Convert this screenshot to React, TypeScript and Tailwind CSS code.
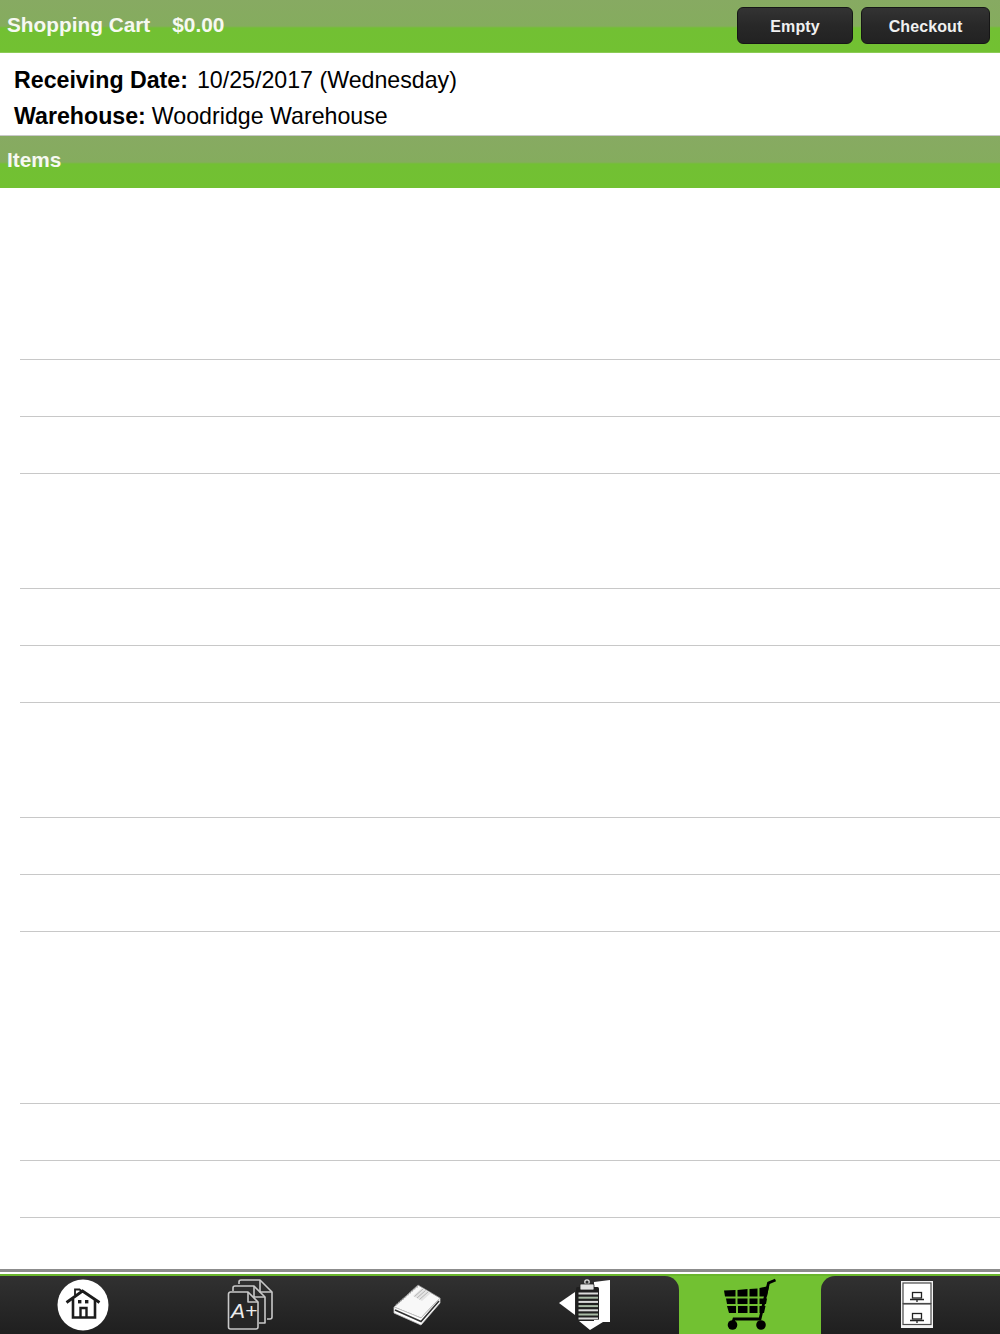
import React from 'react';

const rowHeights = [172, 57, 57, 115, 57, 57, 115, 57, 57, 172, 57, 57];

function GreenBar({ children, className }: { children: React.ReactNode; className?: string }) {
  return (
    <div
      className={`flex w-full items-start justify-between bg-[linear-gradient(to_bottom,#87aa62_0px,#85ac5e_26px,#72c033_28px,#72c132_52px)] ${className ?? ''}`}
    >
      {children}
    </div>
  );
}

function DarkButton({ label, width }: { label: string; width: string }) {
  return (
    <button
      className={`${width} h-[37px] rounded-[6px] border border-[#161616] bg-[linear-gradient(to_bottom,#333333,#282828_50%,#222222)] pt-[3px] text-[16px] font-bold tracking-[0.1px] text-[#f0f0f0]`}
    >
      {label}
    </button>
  );
}

function HomeIcon() {
  return (
    <svg width="52" height="52" viewBox="0 0 52 52">
      <circle cx="26" cy="26" r="25.5" fill="#ffffff" />
      <path d="M18 16V10.5h4.5l3 2.5" fill="none" stroke="#1c1c1c" strokeWidth="1.8" />
      <path d="M9.5 23.5 25.5 12 42.5 23.5" fill="none" stroke="#1c1c1c" strokeWidth="2.8" />
      <path d="M16 20V38.5h22V20" fill="none" stroke="#1c1c1c" strokeWidth="2.6" />
      <rect x="21" y="21" width="3.4" height="3.4" fill="#1c1c1c" />
      <rect x="28" y="21" width="3.4" height="3.4" fill="#1c1c1c" />
      <path d="M23.5 38.5V29h6v9.5" fill="none" stroke="#1c1c1c" strokeWidth="2.4" />
    </svg>
  );
}

function GradesIcon() {
  return (
    <svg width="46" height="51" viewBox="0 0 46 51" fill="none" stroke="#c8c8c8" strokeWidth="1.6" strokeLinejoin="round">
      <path d="M12 5V3a2 2 0 0 1 2-2h19l12 12v25a2 2 0 0 1-2 2h-3" />
      <path d="M33 1v12h12" />
      <path d="M6 12V9a2 2 0 0 1 2-2h19l11 11v26h-6" />
      <path d="M27 7v11h11" />
      <path d="M1.5 15a2 2 0 0 1 2-2H21l10 10v25a2 2 0 0 1-2 2H3.5a2 2 0 0 1-2-2z" fill="#262626" />
      <path d="M21 13v10h10" />
      <text
        x="4"
        y="39"
        fill="#ececec"
        stroke="none"
        fontSize="21"
        fontStyle="italic"
        fontFamily="'Liberation Sans', sans-serif"
      >
        A+
      </text>
    </svg>
  );
}

function BookIcon() {
  return (
    <svg width="50" height="46" viewBox="0 0 50 46">
      <path d="M2 24 26 2l22 13L29 35z" fill="#f8f8f8" stroke="#8a8a8a" strokeWidth="0.8" />
      <path d="M2 24v6L29 42l19-22v-5L29 35z" fill="#ffffff" stroke="#c4c4c4" strokeWidth="0.8" />
      <path d="M3 27 29 38.5 47 18" fill="none" stroke="#333333" strokeWidth="1.6" />
      <path d="M4 22 26 3" fill="none" stroke="#9a9a9a" strokeWidth="1.4" strokeDasharray="1.5 1.5" />
      <path d="M21 13 30 5l9 5-9 8z" fill="#e4e4e4" />
      <path d="M22.5 13.5 31 6M25 15 33.5 7.5M27.5 16.5 36 9" stroke="#b0b0b0" strokeWidth="0.9" />
    </svg>
  );
}

function ClipboardIcon() {
  return (
    <svg width="52" height="52" viewBox="0 0 52 52">
      <path d="M1 25 17 14v23z" fill="#ffffff" />
      <path d="M36 4 52 2v42H45L32 52 21 43h15z" fill="#ffffff" />
      <rect x="18" y="9" width="23" height="33" rx="1.5" fill="#1f1f1f" />
      <circle cx="29" cy="4" r="2.2" fill="none" stroke="#dddddd" strokeWidth="1.3" />
      <rect x="22" y="6" width="14" height="6" rx="1" fill="#e2e2e2" stroke="#1f1f1f" strokeWidth="0.8" />
      {[14.5, 18.7, 22.9, 27.1, 31.3, 35.5, 39.5].map((y, i) => (
        <rect key={y} x="20.5" y={y} width="19.5" height="2" fill={i % 2 === 1 ? '#a9bba6' : '#dadada'} />
      ))}
    </svg>
  );
}

function CartIcon() {
  return (
    <svg width="54" height="52" viewBox="0 0 54 52" fill="#000000">
      <path d="M52.5 2 45.5 5 37 41H11l-1.5 5" fill="none" stroke="#000" strokeWidth="2.8" />
      <path d="M1 12.5 12.5 12v6.5H2zM14.5 12 24.5 11v7.5h-10zM26.5 11l8-.5v8h-8zM36.5 10 46 8l-2 10.5h-7.5z" />
      <path d="M3 20.5h9.5V26H4zM14.5 20.5h10V26h-10zM26.5 20.5h8V26h-8zM36.5 20.5h7.5L43 26h-6.500z" />
      <path d="M4 28h9v7H6zM15 28h9.500v7H15zM26.500 28h8v7h-8zM36.500 28h6l-1.500 7h-4.500z" />
      <circle cx="9.500" cy="47" r="4.800" />
      <circle cx="38" cy="47" r="4.800" />
    </svg>
  );
}

function CabinetIcon() {
  return (
    <svg width="32" height="47" viewBox="0 0 32 47">
      <rect x="0" y="0" width="32" height="47" fill="#f2f2f2" />
      <rect x="2" y="2" width="28" height="20.5" fill="#ffffff" stroke="#4a4a4a" strokeWidth="1.2" />
      <rect x="2" y="23" width="28" height="20.5" fill="#ffffff" stroke="#4a4a4a" strokeWidth="1.2" />
      {[0, 21].map(dy => (
        <g key={dy} transform={`translate(0 ${dy})`} fill="none" stroke="#222" strokeWidth="1.3">
          <rect x="11.500" y="11.500" width="9" height="5.500" />
          <path d="M9 18.500h14M16 18.500v2.500" />
        </g>
      ))}
    </svg>
  );
}

export default function App() {
  return (
    <div className="flex h-[1334px] w-[1000px] flex-col overflow-hidden bg-white font-['Liberation_Sans',Arial,sans-serif] text-black">
      <GreenBar className="h-[53px] border-b border-[#8ccb55]">
        <div className="flex pl-[7px] pt-[12px] text-[20.8px] font-bold leading-[26px] text-[#f6f9f1]">
          <span>Shopping Cart</span>
          <span className="ml-[22px]">$0.00</span>
        </div>
        <div className="flex gap-[8px] pr-[10px] pt-[7px]">
          <DarkButton label="Empty" width="w-[116px]" />
          <DarkButton label="Checkout" width="w-[129px]" />
        </div>
      </GreenBar>

      <div className="flex h-[83px] flex-col border-b border-[#c9c9c9] pl-[14px] pt-[9px] text-[23.2px] leading-[36px]">
        <div>
          <span className="font-bold">Receiving Date:</span>
          <span className="ml-[9px]">10/25/2017 (Wednesday)</span>
        </div>
        <div>
          <span className="font-bold">Warehouse:</span>
          <span className="ml-[6px]">Woodridge Warehouse</span>
        </div>
      </div>

      <GreenBar className="h-[52px]">
        <div className="pl-[7px] pt-[11px] text-[20.8px] font-bold leading-[26px] text-[#f6f9f1]">Items</div>
      </GreenBar>

      <div className="flex-1 pl-[20px]">
        {rowHeights.map((h, i) => (
          <div key={i} className="border-b border-[#c8c8c8]" style={{ height: h }} />
        ))}
      </div>

      <div className="h-[3px] bg-[#8c8c8c]" />
      <div className="h-[2px] bg-white" />
      <div className="flex h-[60px] flex-col">
        <div className="h-[2px] bg-[#69b52c]" />
        <div className="flex flex-1 bg-[#72c132]">
          <div className="grid w-[679px] grid-cols-4 rounded-tr-[14px] bg-[linear-gradient(to_bottom,#313131,#1f1f1f)] pr-[12px]">
            <div className="flex items-start justify-center pt-[3px]"><HomeIcon /></div>
            <div className="flex items-start justify-center pt-[3px]"><GradesIcon /></div>
            <div className="flex items-start justify-center pt-[7px]"><BookIcon /></div>
            <div className="flex items-start justify-center pt-[2px]"><ClipboardIcon /></div>
          </div>
          <div className="flex w-[142px] items-start justify-center pt-[2px]"><CartIcon /></div>
          <div className="flex flex-1 items-start justify-center rounded-tl-[14px] bg-[linear-gradient(to_bottom,#313131,#1f1f1f)] pl-[12px] pt-[5px]">
            <CabinetIcon />
          </div>
        </div>
      </div>
    </div>
  );
}
